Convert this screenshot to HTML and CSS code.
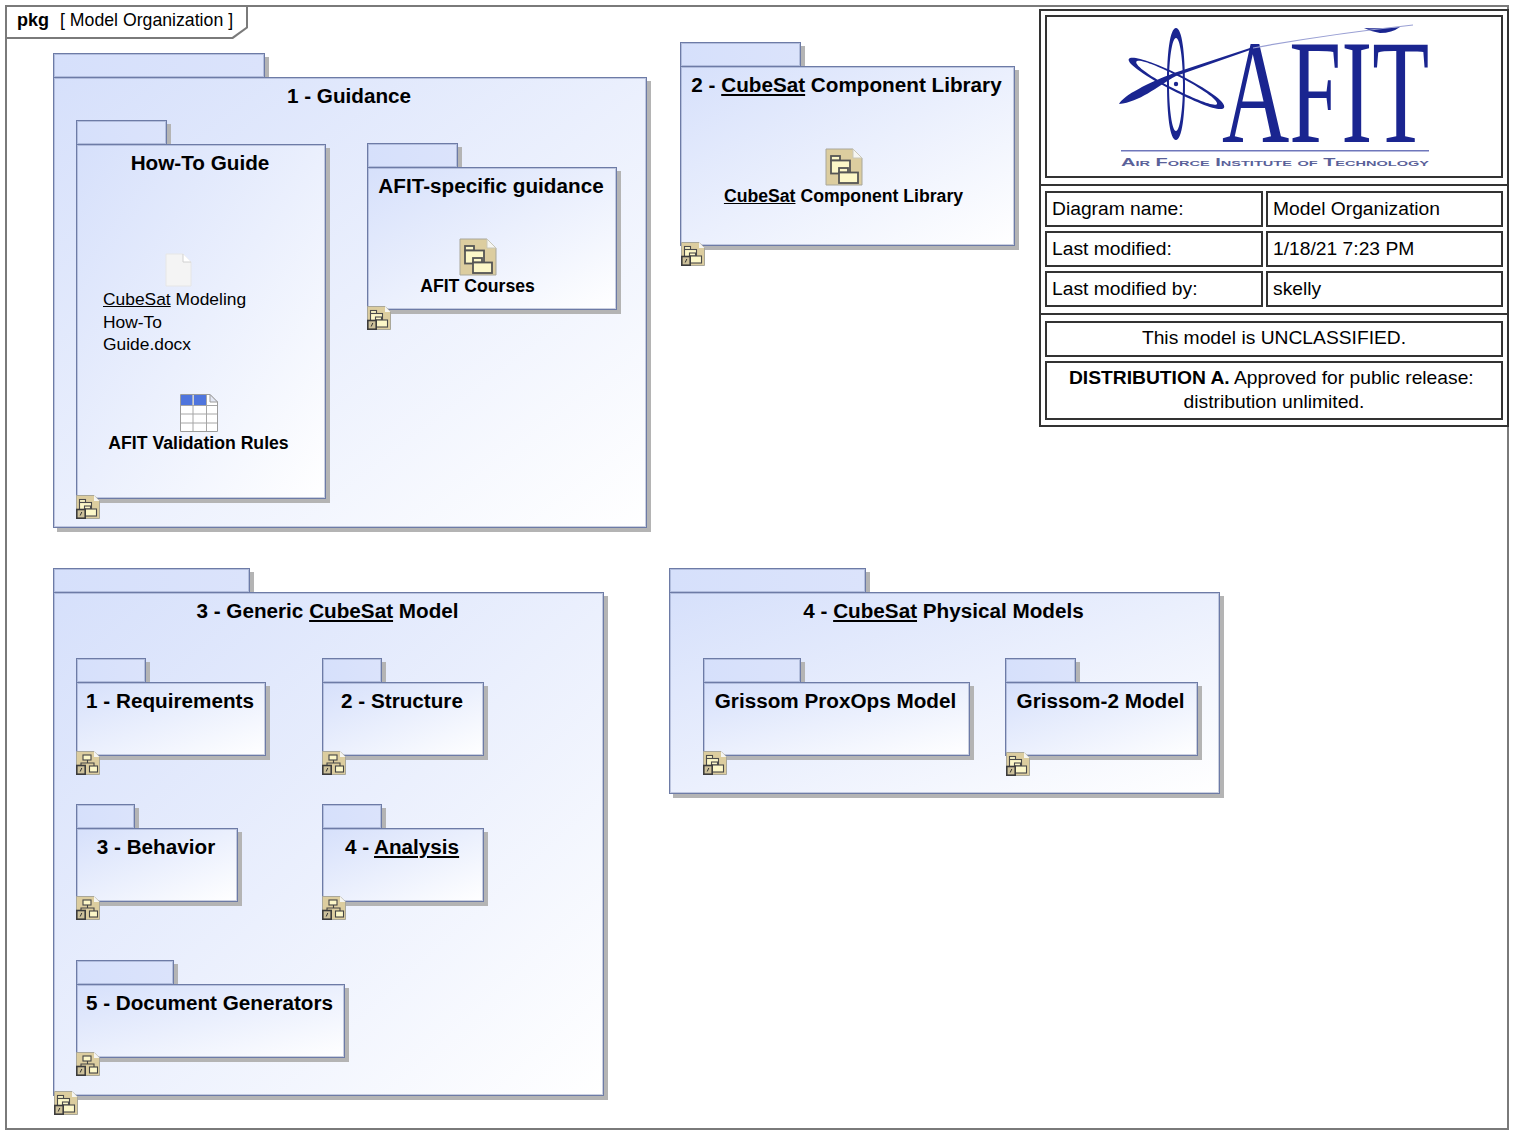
FILE: index.html
```html
<!DOCTYPE html>
<html lang="en">

<head>
  <meta charset="UTF-8" />
  <title>Model Organization</title>
  <link rel="stylesheet" href="styles.css">
</head>

<body>

  <svg class="defs" width="0" height="0">
    <defs>
      <symbol id="pkg-glyph" viewBox="0 0 38 38">
        <path d="M1 1H28L37 10V37H1Z" fill="#dccd9f" stroke="#a9a79a" />
        <path d="M28 1V10H37Z" fill="#f6f6f2" stroke="#c9c7b8" />
        <rect x="6" y="8" width="9" height="4.5" fill="#fcf7c8" stroke="#555" stroke-width="1.8" />
        <rect x="6" y="12.5" width="19" height="13" fill="#fcf7c8" stroke="#555" stroke-width="1.8" />
        <rect x="14" y="20" width="9" height="4.5" fill="#fcf7c8" stroke="#555" stroke-width="1.8" />
        <rect x="14" y="24.5" width="19" height="10.5" fill="#fcf7c8" stroke="#555" stroke-width="1.8" />
      </symbol>
      <symbol id="corner-folder" viewBox="0 0 24 24">
        <path d="M.5 .5H18L23.5 6V23.5H.5Z" fill="#dccd9f" stroke="#a9a79a" />
        <path d="M18 .5V6H23.5Z" fill="#f6f6f2" />
        <rect x="3.5" y="4.5" width="6" height="3" fill="#fcf7c8" stroke="#4a4a4a" stroke-width="1.1" />
        <rect x="3.5" y="7.5" width="12" height="8" fill="#fcf7c8" stroke="#4a4a4a" stroke-width="1.1" />
        <rect x="8.5" y="11" width="6" height="3" fill="#fcf7c8" stroke="#4a4a4a" stroke-width="1.1" />
        <rect x="8.5" y="14" width="12" height="7" fill="#fcf7c8" stroke="#4a4a4a" stroke-width="1.1" />
        <rect x=".8" y="14.5" width="8.4" height="8.7" fill="#cdc19a" stroke="#3c3c3c" stroke-width="1.6" />
        <path d="M5.8 17L4.2 20.5" stroke="#333" fill="none" />
      </symbol>
      <symbol id="corner-tree" viewBox="0 0 24 24">
        <path d="M.5 .5H18L23.5 6V23.5H.5Z" fill="#dccd9f" stroke="#a9a79a" />
        <path d="M18 .5V6H23.5Z" fill="#f6f6f2" />
        <path d="M11.5 9V12M5 15V12H18V15" fill="none" stroke="#444" stroke-width="1.1" />
        <rect x="7" y="4" width="8" height="5" fill="#fcf7c8" stroke="#444" stroke-width="1.1" />
        <rect x="13.5" y="15" width="8" height="6" fill="#fcf7c8" stroke="#444" stroke-width="1.1" />
        <rect x=".8" y="14.5" width="8.4" height="8.7" fill="#cdc19a" stroke="#3c3c3c" stroke-width="1.6" />
        <path d="M5.8 17L4.2 20.5" stroke="#333" fill="none" />
      </symbol>
    </defs>
  </svg>

  <div class="canvas">
    <div class="frame"></div>
    <div class="frame-tag"><b>pkg</b><span>[ Model Organization ]</span></div>

    <!-- packages -->
    <div class="pkg p-guidance"><div class="tab"></div><div class="body">1 - Guidance</div></div>
    <div class="pkg p-howto"><div class="tab"></div><div class="body">How-To Guide</div></div>
    <div class="pkg p-afit"><div class="tab"></div><div class="body">AFIT-specific guidance</div></div>
    <div class="pkg p-library"><div class="tab"></div><div class="body">2 - <u>CubeSat</u> Component Library</div></div>
    <div class="pkg p-generic"><div class="tab"></div><div class="body">3 - Generic <u>CubeSat</u> Model</div></div>
    <div class="pkg p-req"><div class="tab"></div><div class="body">1 - Requirements</div></div>
    <div class="pkg p-struct"><div class="tab"></div><div class="body">2 - Structure</div></div>
    <div class="pkg p-behavior"><div class="tab"></div><div class="body">3 - Behavior</div></div>
    <div class="pkg p-analysis"><div class="tab"></div><div class="body">4 - <u>Analysis</u></div></div>
    <div class="pkg p-docgen"><div class="tab"></div><div class="body">5 - Document Generators</div></div>
    <div class="pkg p-physical"><div class="tab"></div><div class="body">4 - <u>CubeSat</u> Physical Models</div></div>
    <div class="pkg p-proxops"><div class="tab"></div><div class="body">Grissom ProxOps Model</div></div>
    <div class="pkg p-grissom2"><div class="tab"></div><div class="body">Grissom-2 Model</div></div>

    <!-- elements inside packages -->
    <div class="element e-doc">
      <svg class="doc-icon" viewBox="0 0 27 34">
        <path d="M1 1H18L26 9V33H1Z" fill="#f4f4f4" stroke="#e6e6e6" />
        <path d="M18 1V9H26" fill="#fff" stroke="#d0d0d0" />
      </svg>
      <div class="doc-label"><u>CubeSat</u> Modeling<br>How-To<br>Guide.docx</div>
    </div>

    <div class="element e-table">
      <svg class="big-icon" viewBox="0 0 38 38">
        <path d="M.5 .5H30L37.5 8V37.5H.5Z" fill="#fff" stroke="#9c9c9c" />
        <rect x="1" y="1" width="11.5" height="10" fill="#4f75dd" />
        <rect x="14" y="1" width="12" height="10" fill="#4f75dd" />
        <path d="M30 .5V8H37.5Z" fill="#e4e8f4" stroke="#9c9c9c" />
        <path d="M13 1V37M26.5 1V37M1 11.5H37M1 20H37M1 29H37" stroke="#a6a6a6" fill="none" />
      </svg>
      <div class="element-label">AFIT Validation Rules</div>
    </div>

    <div class="element e-courses">
      <svg class="big-icon"><use href="#pkg-glyph" /></svg>
      <div class="element-label">AFIT Courses</div>
    </div>

    <div class="element e-library">
      <svg class="big-icon"><use href="#pkg-glyph" /></svg>
      <div class="element-label"><u>CubeSat</u> Component Library</div>
    </div>

    <!-- corner markers -->
    <svg class="corner c-howto"><use href="#corner-folder" /></svg>
    <svg class="corner c-afit"><use href="#corner-folder" /></svg>
    <svg class="corner c-library"><use href="#corner-folder" /></svg>
    <svg class="corner c-generic"><use href="#corner-folder" /></svg>
    <svg class="corner c-req"><use href="#corner-tree" /></svg>
    <svg class="corner c-struct"><use href="#corner-tree" /></svg>
    <svg class="corner c-behavior"><use href="#corner-tree" /></svg>
    <svg class="corner c-analysis"><use href="#corner-tree" /></svg>
    <svg class="corner c-docgen"><use href="#corner-tree" /></svg>
    <svg class="corner c-proxops"><use href="#corner-folder" /></svg>
    <svg class="corner c-grissom2"><use href="#corner-folder" /></svg>

    <!-- title block -->
    <div class="title-block">
      <div class="tb-section tb-top">
        <div class="cell logo-cell">
          <svg class="logo" viewBox="1047 17 454 159">
            <g fill="#1a2590">
              <path fill-rule="evenodd" d="M1176 28C1182 28 1185 53 1185 84S1182 140 1176 140 1167 115 1167 84 1170 28 1176 28ZM1176 38C1172 38 1169 60 1169 84S1172 131 1176 131 1183 108 1183 84 1180 38 1176 38Z" />
              <path fill-rule="evenodd" transform="rotate(27 1176 83)" d="M1123 83C1123 78 1147 74 1176 74S1230 77 1230 83 1205 91 1176 91 1123 88 1123 83ZM1131 82C1131 86 1152 89 1176 89S1222 87 1222 83 1200 76 1176 76 1131 78 1131 82Z" />
              <path d="M1119 104C1124 95 1148 83 1174 73L1253 47L1253 49L1176 76C1156 87 1140 102 1119 104Z" />
              <path d="M1364 28Q1382 29 1400 27Q1392 33 1380 33Q1372 32 1364 28Z" />
              <circle cx="1176" cy="84" r="2.2" />
              <text class="logo-letters" transform="translate(1222 142) scale(.63 1)">AFIT</text>
            </g>
            <path d="M1253 48Q1330 34 1413 25" fill="none" stroke="#9aa0d4" stroke-width="1.2" />
            <rect x="1121" y="150" width="308" height="1.5" fill="#6f77bb" />
            <text class="logo-tag" x="1121" y="166" textLength="308" lengthAdjust="spacingAndGlyphs">Air Force Institute of Technology</text>
          </svg>
        </div>
      </div>
      <div class="tb-section tb-grid">
        <div class="cell">Diagram name:</div>
        <div class="cell">Model Organization</div>
        <div class="cell">Last modified:</div>
        <div class="cell">1/18/21 7:23 PM</div>
        <div class="cell">Last modified by:</div>
        <div class="cell">skelly</div>
      </div>
      <div class="tb-section tb-notes">
        <div class="cell center">This model is UNCLASSIFIED.</div>
        <div class="cell center"><b>DISTRIBUTION A.</b> Approved for public release:&nbsp;<br>distribution unlimited.</div>
      </div>
    </div>
  </div>

</body>

</html>
```

FILE: styles.css
```css
:root {
  --pkg-line: #6d7ba6;
  --pkg-soft: rgba(109, 123, 166, 0.35);
  --pkg-shadow: #b4b4b4;
  --pkg-start: #d6e0fb;
}

body {
  margin: 0;
  background: #fff;
  color: #000;
  font-family: "Liberation Sans", Arial, sans-serif;
}

.defs {
  position: absolute;
}

.canvas {
  position: relative;
  width: 1516px;
  height: 1134px;
  overflow: hidden;
}

.frame {
  position: absolute;
  left: 5px;
  top: 5px;
  width: 1500px;
  height: 1121px;
  border: 2px solid #7a7a7a;
}

.frame-tag {
  position: absolute;
  left: 5px;
  top: 5px;
  width: 243px;
  height: 34px;
  display: flex;
  align-items: center;
  gap: 11px;
  padding: 0 0 3px 12px;
  box-sizing: border-box;
  font-size: 18px;
  background: #7a7a7a;
  clip-path: polygon(0 0, 100% 0, 100% 23px, 228px 100%, 0 100%);
}

.frame-tag::before {
  content: "";
  position: absolute;
  inset: 2px;
  background: #fff;
  clip-path: polygon(0 0, 100% 0, 100% 20px, 225px 100%, 0 100%);
}

.frame-tag b,
.frame-tag span {
  position: relative;
}

.frame-tag span {
  font-size: 17.7px;
}

/* package = tab + body */
.pkg {
  position: absolute;
  display: flex;
  flex-direction: column;
  align-items: flex-start;
}

.tab {
  width: var(--tab);
  height: 25px;
  margin-bottom: -1px;
  box-sizing: border-box;
  flex: none;
  background: linear-gradient(to right, var(--pkg-start), #dbe3fb);
  border: 1px solid var(--pkg-line);
  box-shadow: inset 0 0 0 1px var(--pkg-soft), 4px 4px 0 var(--pkg-shadow);
}

.body {
  position: relative;
  flex: 1;
  align-self: stretch;
  box-sizing: border-box;
  padding: 6px 2px 0 0;
  text-align: center;
  font-size: 20.7px;
  line-height: 24px;
  font-weight: bold;
  background: linear-gradient(to bottom right, var(--pkg-start), #fff);
  border: 1px solid var(--pkg-line);
  box-shadow: inset 0 0 0 1px var(--pkg-soft), 4px 4px 0 var(--pkg-shadow);
}

.p-guidance { left: 53px; top: 53px; width: 594px; height: 475px; --tab: 212px; }
.p-howto { left: 76px; top: 120px; width: 250px; height: 379px; --tab: 91px; }
.p-afit { left: 367px; top: 143px; width: 250px; height: 167px; --tab: 91px; }
.p-library { left: 680px; top: 42px; width: 335px; height: 204px; --tab: 121px; }
.p-generic { left: 53px; top: 568px; width: 551px; height: 528px; --tab: 197px; }
.p-req { left: 76px; top: 658px; width: 190px; height: 98px; --tab: 70px; }
.p-struct { left: 322px; top: 658px; width: 162px; height: 98px; --tab: 60px; }
.p-behavior { left: 76px; top: 804px; width: 162px; height: 98px; --tab: 59px; }
.p-analysis { left: 322px; top: 804px; width: 162px; height: 98px; --tab: 60px; }
.p-docgen { left: 76px; top: 960px; width: 269px; height: 98px; --tab: 98px; }
.p-physical { left: 669px; top: 568px; width: 551px; height: 226px; --tab: 197px; }
.p-proxops { left: 703px; top: 658px; width: 267px; height: 98px; --tab: 98px; }
.p-grissom2 { left: 1005px; top: 658px; width: 193px; height: 98px; --tab: 71px; }

/* things placed inside packages */
.element {
  position: absolute;
  display: flex;
  flex-direction: column;
  align-items: center;
}

.big-icon {
  display: block;
  width: 38px;
  height: 38px;
}

.doc-icon {
  display: block;
  width: 27px;
  height: 34px;
}

.element-label {
  font-size: 17.65px;
  line-height: 20px;
  font-weight: bold;
  white-space: nowrap;
}

.e-table .element-label {
  margin-top: 1px;
}

.doc-label {
  align-self: flex-start;
  margin-top: 1px;
  font-size: 17.4px;
  line-height: 22.5px;
  white-space: nowrap;
}

.e-doc { left: 103px; top: 253px; width: 150px; }
.e-table { left: 108px; top: 394px; width: 181px; }
.e-courses { left: 420px; top: 238px; width: 115px; }
.e-library { left: 724px; top: 148px; width: 239px; }

.corner {
  position: absolute;
  width: 24px;
  height: 24px;
}

.c-howto { left: 76px; top: 495px; }
.c-afit { left: 367px; top: 306px; }
.c-library { left: 681px; top: 242px; }
.c-generic { left: 54px; top: 1091px; }
.c-req { left: 76px; top: 751px; }
.c-struct { left: 322px; top: 751px; }
.c-behavior { left: 76px; top: 896px; }
.c-analysis { left: 322px; top: 896px; }
.c-docgen { left: 76px; top: 1052px; }
.c-proxops { left: 703px; top: 751px; }
.c-grissom2 { left: 1006px; top: 752px; }

/* title block */
.title-block {
  position: absolute;
  left: 1039px;
  top: 9px;
  width: 470px;
  box-sizing: border-box;
  border: 2px solid #333;
  background: #fff;
  font-size: 19.25px;
}

.tb-section {
  padding: 4px 4px 6px;
}

.tb-section + .tb-section {
  border-top: 2px solid #333;
}

.tb-grid {
  display: grid;
  grid-template-columns: 218px 1fr;
  gap: 4px 3px;
  padding-top: 5px;
}

.tb-notes {
  display: flex;
  flex-direction: column;
  gap: 4px;
  padding-top: 6px;
  padding-bottom: 5px;
}

.cell {
  box-sizing: border-box;
  border: 2px solid #333;
  min-height: 36px;
  padding: 4px 5px;
  line-height: 23px;
}

.center {
  text-align: center;
  padding: 3px 0 4px;
  line-height: 24px;
}

.logo-cell {
  height: 163px;
  padding: 0;
}

.logo {
  display: block;
  width: 100%;
  height: 100%;
  overflow: visible;
}

.logo-letters {
  font-family: "Liberation Serif", serif;
  font-size: 148px;
}

.logo-tag {
  font-size: 11px;
  font-weight: bold;
  font-variant: small-caps;
  fill: #5a6199;
}
```
